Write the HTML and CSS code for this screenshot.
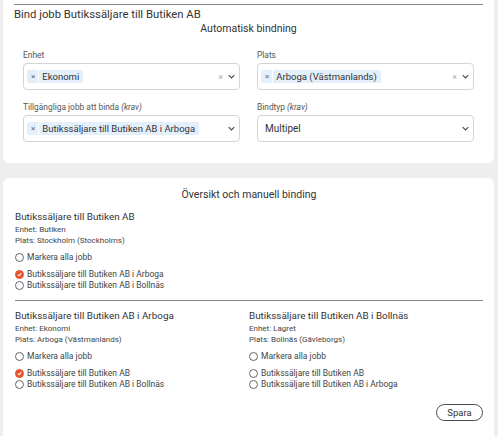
FILE: index.html
```html
<!DOCTYPE html>
<html lang="sv">
<head>
<meta charset="utf-8">
<link rel="stylesheet" href="styles.css">
</head>
<body>
<div class="page">
  <section class="card card-top">
    <hr class="rule">
    <h1 class="title">Bind jobb Butikssäljare till Butiken AB</h1>
    <h2 class="subtitle">Automatisk bindning</h2>
    <div class="form-grid">
      <div class="field">
        <label class="label">Enhet</label>
        <div class="select">
          <div class="values">
            <span class="tag"><span class="tag-x">×</span><span class="tag-text">Ekonomi</span></span>
          </div>
          <span class="clear">×</span>
          <svg class="chev" viewBox="0 0 10 6" width="7" height="5"><path d="M1 1l4 4 4-4" fill="none" stroke="#444" stroke-width="1.5"/></svg>
        </div>
      </div>
      <div class="field">
        <label class="label">Plats</label>
        <div class="select">
          <div class="values">
            <span class="tag"><span class="tag-x">×</span><span class="tag-text">Arboga (Västmanlands)</span></span>
          </div>
          <span class="clear">×</span>
          <svg class="chev" viewBox="0 0 10 6" width="7" height="5"><path d="M1 1l4 4 4-4" fill="none" stroke="#444" stroke-width="1.5"/></svg>
        </div>
      </div>
      <div class="field">
        <label class="label">Tillgängliga jobb att binda <em>(krav)</em></label>
        <div class="select">
          <div class="values">
            <span class="tag"><span class="tag-x">×</span><span class="tag-text">Butikssäljare till Butiken AB i Arboga</span></span>
          </div>
          <svg class="chev" viewBox="0 0 10 6" width="7" height="5"><path d="M1 1l4 4 4-4" fill="none" stroke="#444" stroke-width="1.5"/></svg>
        </div>
      </div>
      <div class="field">
        <label class="label">Bindtyp <em>(krav)</em></label>
        <div class="select">
          <div class="values"><span class="plain">Multipel</span></div>
          <svg class="chev" viewBox="0 0 10 6" width="7" height="5"><path d="M1 1l4 4 4-4" fill="none" stroke="#444" stroke-width="1.5"/></svg>
        </div>
      </div>
    </div>
  </section>

  <section class="card card-bottom">
    <h2 class="subtitle sub2">Översikt och manuell binding</h2>
    <div class="job">
      <h3 class="job-title">Butikssäljare till Butiken AB</h3>
      <p class="meta">Enhet: Butiken</p>
      <p class="meta">Plats: Stockholm (Stockholms)</p>
      <div class="radio all"><span class="dot"></span>Markera alla jobb</div>
      <div class="list">
        <div class="radio"><span class="dot on"><svg viewBox="0 0 10 10" width="9" height="9"><path d="M2.6 5.2l1.7 1.7 3.2-3.6" fill="none" stroke="#fff" stroke-width="1.5"/></svg></span>Butikssäljare till Butiken AB i Arboga</div>
        <div class="radio"><span class="dot"></span>Butikssäljare till Butiken AB i Bollnäs</div>
      </div>
    </div>
    <hr class="rule rule2">
    <div class="cols">
      <div class="job">
        <h3 class="job-title">Butikssäljare till Butiken AB i Arboga</h3>
        <p class="meta">Enhet: Ekonomi</p>
        <p class="meta">Plats: Arboga (Västmanlands)</p>
        <div class="radio all"><span class="dot"></span>Markera alla jobb</div>
        <div class="list">
          <div class="radio"><span class="dot on"><svg viewBox="0 0 10 10" width="9" height="9"><path d="M2.6 5.2l1.7 1.7 3.2-3.6" fill="none" stroke="#fff" stroke-width="1.5"/></svg></span>Butikssäljare till Butiken AB</div>
          <div class="radio"><span class="dot"></span>Butikssäljare till Butiken AB i Bollnäs</div>
        </div>
      </div>
      <div class="job">
        <h3 class="job-title">Butikssäljare till Butiken AB i Bollnäs</h3>
        <p class="meta">Enhet: Lagret</p>
        <p class="meta">Plats: Bollnäs (Gävleborgs)</p>
        <div class="radio all"><span class="dot"></span>Markera alla jobb</div>
        <div class="list">
          <div class="radio"><span class="dot"></span>Butikssäljare till Butiken AB</div>
          <div class="radio"><span class="dot"></span>Butikssäljare till Butiken AB i Arboga</div>
        </div>
      </div>
    </div>
    <div class="actions"><button class="btn">Spara</button></div>
  </section>
</div>
</body>
</html>
```
FILE: styles.css
```css
* { box-sizing: border-box; }
html, body { margin: 0; padding: 0; }
body {
  background: #eeeeee;
  font-family: "Roboto", "Liberation Sans", sans-serif;
  color: #3a3a3a;
  height: 436px;
  overflow: hidden;
}
.page {
  padding: 0 4px 0 3px;
  display: flex;
  flex-direction: column;
  gap: 15px;
}
.card {
  background: #fff;
  border-radius: 6px;
}
.card-top {
  border-radius: 0 0 6px 6px;
  padding: 4px 20px 0 20px;
  height: 163px;
}
.rule {
  border: 0;
  border-top: 1px solid #8a8a8a;
  margin: 0 -9px;
  height: 0;
}
.title {
  font-size: 11.3px;
  font-weight: 400;
  margin: 3px 0 0 -9px;
  line-height: 14px;
  color: #333;
}
.subtitle {
  text-align: center;
  font-size: 10.5px;
  font-weight: 400;
  margin: 0;
  line-height: 14px;
  color: #333;
}
.form-grid {
  display: grid;
  grid-template-columns: 1fr 1fr;
  column-gap: 17px;
  row-gap: 12px;
  margin-top: 14px;
}
.field { display: flex; flex-direction: column; }
.label {
  font-size: 8.4px;
  color: #555;
  line-height: 10px;
  margin-bottom: 3px;
}
.label em { font-style: italic; }
.select {
  height: 27px;
  border: 1px solid #d4d4d4;
  border-radius: 4px;
  display: flex;
  align-items: center;
  padding: 0 4px 0 3px;
}
.values { flex: 1; display: flex; align-items: center; min-width: 0; }
.tag {
  display: inline-flex;
  align-items: center;
  background: #e3effb;
  height: 13px;
  border-radius: 2px;
  font-size: 9.5px;
  color: #333;
  white-space: nowrap;
}
.tag-x {
  font-size: 8px;
  color: #666;
  padding: 0 3px 0 4px;
  border-right: 1px solid #fff;
  line-height: 13px;
}
.tag-text { padding: 0 4px 0 3px; }
.plain { font-size: 10px; color: #333; padding-left: 4px; }
.clear {
  font-size: 9px;
  color: #aaa;
  margin-right: 5px;
}
.chev { display: block; }
.card-bottom {
  padding: 10px 11px 10px 12px;
  height: 300px;
}
.sub2 { margin: 0 0 8px; }
.job-title {
  font-size: 9.9px;
  font-weight: 400;
  margin: 0 0 1px;
  line-height: 13px;
  color: #333;
}
.meta {
  font-size: 8px;
  margin: 0;
  line-height: 11px;
  color: #444;
}
.radio {
  display: flex;
  align-items: center;
  font-size: 8.5px;
  line-height: 11px;
  color: #444;
  white-space: nowrap;
}
.radio.all { margin: 6px 0 6px; }
.dot {
  width: 9px;
  height: 9px;
  border-radius: 50%;
  border: 1px solid #666;
  margin-right: 3px;
  display: inline-flex;
  align-items: center;
  justify-content: center;
  flex: none;
}
.dot.on { background: #e9532d; border-color: #e9532d; }
.dot.on svg { display: block; }
.rule2 { margin: 9px 0 8px; }
.cols {
  display: grid;
  grid-template-columns: 1fr 1fr;
}
.actions {
  display: flex;
  justify-content: flex-end;
  margin-top: 14px;
}
.btn {
  font-family: inherit;
  font-size: 9.5px;
  color: #333;
  background: #fff;
  border: 1px solid #4a4a55;
  border-radius: 9px;
  width: 47px;
  height: 17px;
  padding: 0;
}
```
